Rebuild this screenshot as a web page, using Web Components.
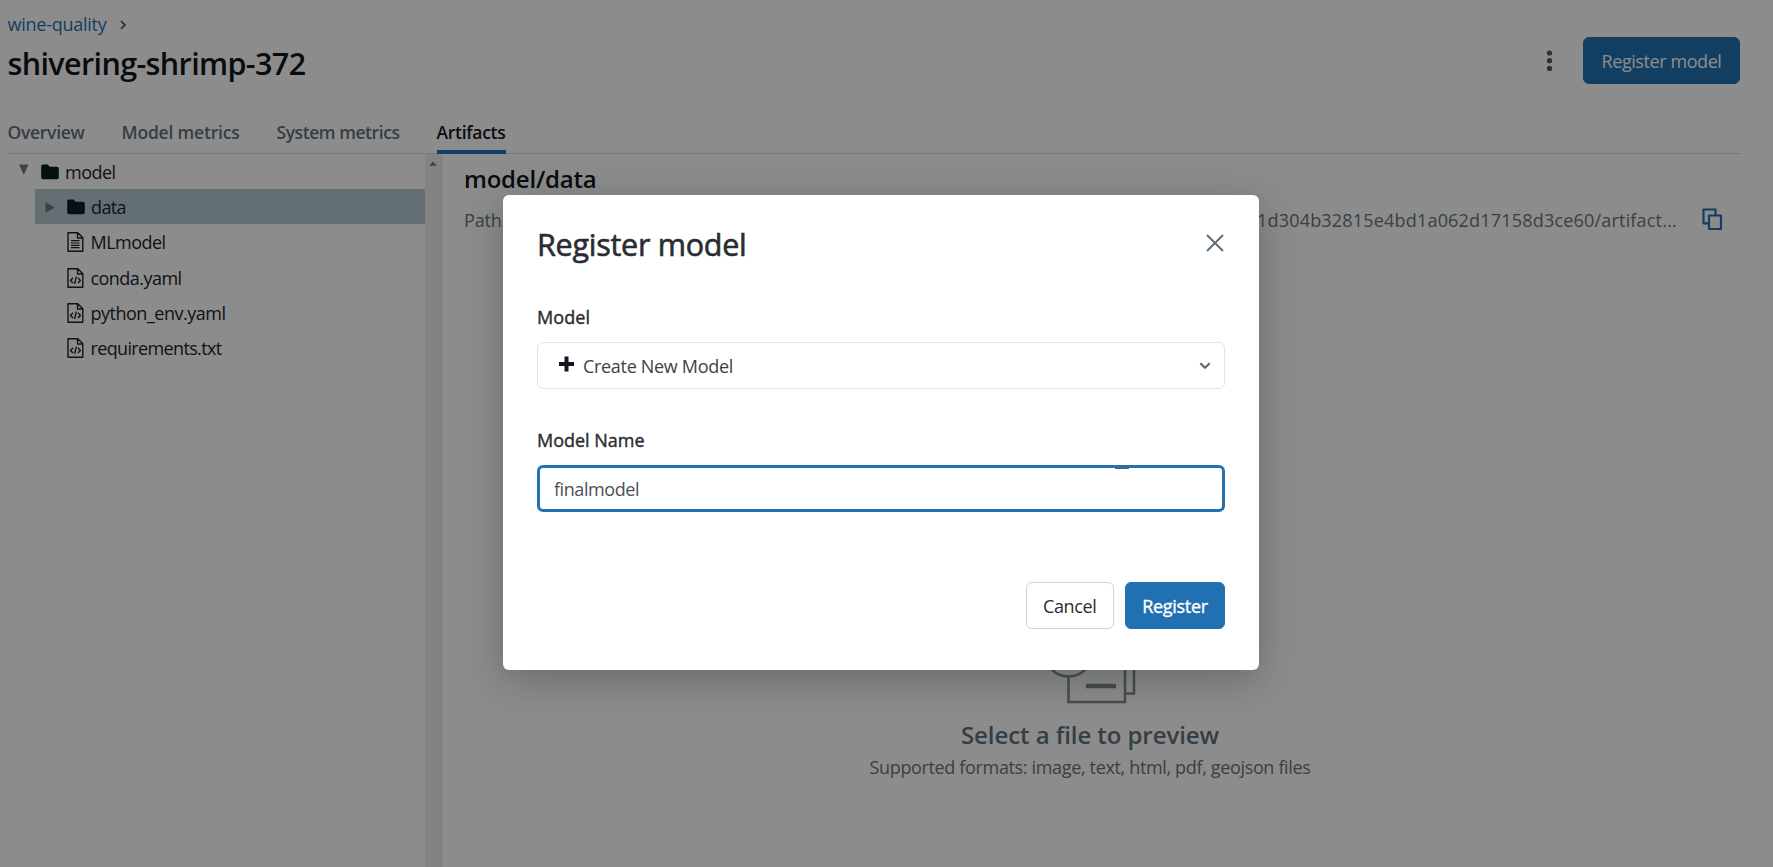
<!DOCTYPE html>
<html lang="en">
<head>
<meta charset="utf-8">
<title>shivering-shrimp-372</title>
<style>
html,body{margin:0;height:100%;overflow:hidden;background:#fff}
body{font-family:"Open Sans","Noto Sans",sans-serif;font-size:18px;line-height:24px;color:#11171c}
</style>
</head>
<body>
<run-page></run-page>
<register-dialog></register-dialog>
<script>
const define=(name,html,setup)=>{
  const t=document.createElement('template');
  t.innerHTML=html;
  customElements.define(name,class extends HTMLElement{
    connectedCallback(){
      if(this.shadowRoot)return;
      this.attachShadow({mode:'open'}).append(t.content.cloneNode(true));
      if(setup)setup(this,this.shadowRoot);
    }
  });
};

/* One line of text whose tracking is adjusted to fill the width in "w". */
define('fit-text',`<style>:host{display:block;white-space:pre;flex:none}span{display:inline-block}</style><span><slot></slot></span>`,(el,root)=>{
  const w=+el.getAttribute('w'),s=root.querySelector('span');
  el.style.width=w+'px';
  const n=el.textContent.length;
  s.style.letterSpacing=((w-s.getBoundingClientRect().width)/n)+'px';
});

const icons={
  folder:'<svg width="18" height="16" viewBox="0 0 18 16"><path fill="#0b1c22" d="M2 .5h4.6l2.2 2.3H16a1.8 1.8 0 0 1 1.8 1.8v8.900a1.800 1.800 0 0 1-1.800 1.800H2A1.800 1.800 0 0 1 .2 13.500V2.300A1.800 1.800 0 0 1 2 .5Z"/></svg>',
  file:'<svg width="17" height="20" viewBox="0 0 17 20" fill="none" stroke="#1d2428" stroke-width="1.400"><path d="M1 .8h9.800l5 5V19.200H1ZM10.500 1v5h5" stroke-linejoin="round"/><path d="M4 8.700h8.500M4 11h8.500M4 13.300h8.500M4 15.600h8.500" stroke-width="1.200"/></svg>',
  code:'<svg width="17" height="20" viewBox="0 0 17 20" fill="none" stroke="#1d2428" stroke-width="1.400"><path d="M1 .8h9.800l5 5V19.200H1ZM10.500 1v5h5M6 9.700 3.500 12.400 6 15.100M10.900 9.700l2.500 2.700-2.500 2.700M9.300 8.700l-1.700 7.400" stroke-linejoin="round"/></svg>',
  down:'<svg width="10" height="11"><path d="M0 .5h9.500L4.800 10.800Z" fill="#777"/></svg>',
  right:'<svg width="10" height="11"><path d="M.5.300 10 5.500.5 10.700Z" fill="#777"/></svg>',
};

define('run-breadcrumb',`<style>:host{display:flex;align-items:center;height:24px;padding-top:11.500px;color:#2272b4;gap:13px}svg{margin-top:3px}</style>
<fit-text w="99">wine-quality</fit-text>
<svg width="7" height="10" fill="none" stroke="#55626a" stroke-width="1.800"><path d="m1 1.200 4 3.800-4 3.800"/></svg>`);

define('ui-button',`<style>
:host{display:flex;box-sizing:border-box;height:47px;border-radius:6px;border:1px solid #c9d6dc;align-items:center;justify-content:center;background:#fff;padding-top:1px}
:host([primary]){background:#2171b2;color:#fff;border-color:#2171b2}
</style><slot></slot>`);

define('run-header',`<style>
:host{display:flex;justify-content:space-between;height:110px;margin:0 33px 0 7.500px}
h1{margin:0;font-size:30.500px;line-height:40px;font-weight:600;padding-top:7px}
.actions{display:flex;align-items:flex-start;gap:30.500px;padding-top:37px}
.menu{padding-top:12px;height:24px}
ui-button{width:157px}
</style>
<div><run-breadcrumb></run-breadcrumb><h1><fit-text w="298">shivering-shrimp-372</fit-text></h1></div>
<div class="actions"><svg class="menu" width="7" height="24" fill="#4c5a61"><circle cx="3.500" cy="4" r="2.600"/><circle cx="3.500" cy="11.700" r="2.600"/><circle cx="3.500" cy="19.400" r="2.600"/></svg>
<ui-button primary><fit-text w="120">Register model</fit-text></ui-button></div>`);

define('run-tabs',`<style>
:host{display:flex;box-sizing:border-box;height:44px;margin:0 33px 0 7.500px;border-bottom:1.500px solid #d3dade;gap:37px;color:#5f7281;font-weight:600;font-size:17.500px}
div{height:39.500px;padding-top:10px;box-sizing:border-box}
.on{color:#11171c;border-bottom:4.500px solid #2272b4;height:44px}
</style>
<div><fit-text w="77">Overview</fit-text></div><div><fit-text w="118">Model metrics</fit-text></div>
<div><fit-text w="123">System metrics</fit-text></div><div class="on"><fit-text w="69">Artifacts</fit-text></div>`);

define('tree-row',`<style>
:host{display:flex;align-items:center;height:35.200px;box-sizing:border-box;padding:1px 0 0 18.500px;color:#1d2428}
:host([nested]){margin-left:34.500px;padding-left:10px}
:host([selected]){background:#b6cbd3}
.arrow{width:11px;display:flex;margin-right:11px}
:host(:not([nested])) .arrow{margin-bottom:5px}
.icon{width:17px;display:flex;margin-right:7px}
.icon svg{flex:none}
:host([icon=folder]) .icon{margin-right:7.500px;margin-top:-1px}
</style><span class="arrow"></span><span class="icon"></span><slot></slot>`,(el,root)=>{
  root.querySelector('.arrow').innerHTML=icons[el.getAttribute('arrow')]||'';
  root.querySelector('.icon').innerHTML=icons[el.getAttribute('icon')];
});

define('artifact-tree',`<style>
:host{display:flex;width:442px;flex:none;box-sizing:border-box}
.rows{flex:1}
.bar{width:16px;background:#efefef;border-right:1px solid #dfe3e5;display:flex;justify-content:center;padding-top:7px}
</style>
<div class="rows">
<tree-row icon="folder" arrow="down"><fit-text w="50.500">model</fit-text></tree-row>
<tree-row nested selected icon="folder" arrow="right"><fit-text w="35">data</fit-text></tree-row>
<tree-row nested icon="file"><fit-text w="75">MLmodel</fit-text></tree-row>
<tree-row nested icon="code"><fit-text w="91">conda.yaml</fit-text></tree-row>
<tree-row nested icon="code"><fit-text w="135">python_env.yaml</fit-text></tree-row>
<tree-row nested icon="code"><fit-text w="131">requirements.txt</fit-text></tree-row>
</div>
<div class="bar"><svg width="8" height="5"><path d="M.3 4.800 4 .5l3.700 4.300Z" fill="#777"/></svg></div>`);

define('artifact-preview',`<style>
:host{display:flex;flex:1;flex-direction:column;min-width:0}
h2{margin:0;font-size:24px;line-height:32px;font-weight:600;padding:8.500px 0 0 22px}
.path{display:flex;align-items:center;color:#67767f;padding:13px 50px 0 22px;height:24px}
.path .end{margin-left:auto}
.path svg{margin:-1px 0 0 25px}
.empty{display:flex;flex-direction:column;align-items:center;color:#5f7281;padding:395px 0 0;width:440px;margin-left:428px}
.empty svg{margin-left:-1px}
h3{margin:0;font-size:24px;line-height:32px;font-weight:600;padding-top:15px}
.empty .sub{padding-top:4px;color:#67767f}
</style>
<h2><fit-text w="132.500">model/data</fit-text></h2>
<div class="path"><fit-text w="42">Path:</fit-text><fit-text class="end" w="420">1d304b32815e4bd1a062d17158d3ce60/artifact...</fit-text>
<svg width="21" height="23" fill="none" stroke="#2272b4" stroke-width="2.200"><path d="M6.500 15.300H1.500V1.500h12v5M7 7.500h12v13.500H7Z" stroke-linejoin="round"/></svg></div>
<div class="empty">
<svg width="94" height="77" viewBox="0 0 94 77" fill="none" stroke="#858a88" stroke-width="2.600"><path d="M25.500 49v26H82V2H40M82 66.500h9V12H83"/><circle cx="25.500" cy="26" r="23.500"/><path d="M43 59h30" stroke-width="4.500"/></svg>
<h3><fit-text w="258">Select a file to preview</fit-text></h3>
<fit-text class="sub" w="441">Supported formats: image, text, html, pdf, geojson files</fit-text>
</div>`);

define('run-page',`<style>
:host{display:flex;flex-direction:column;height:100vh;overflow:hidden}
main{display:flex;flex:1;min-height:0}
</style><run-header></run-header><run-tabs></run-tabs><main><artifact-tree></artifact-tree><artifact-preview></artifact-preview></main>`);

define('model-select',`<style>
:host{display:flex;align-items:center;box-sizing:border-box;height:47px;border:1.500px solid #dde5e8;border-radius:6px;padding:1px 13px 0 20.500px;color:#3c4246}
.plus{margin:-3px 8.500px 0 0}
.chev{margin-left:auto}
</style>
<svg class="plus" width="16" height="16"><path d="M0 8h15M7.500.5v15" stroke="#11171c" stroke-width="4"/></svg>
<fit-text w="150">Create New Model</fit-text>
<svg class="chev" width="12" height="8" fill="none" stroke="#5a6b78" stroke-width="2.200"><path d="m1.300 1.200 4.700 4.500 4.700-4.500"/></svg>`);

define('name-input',`<style>
:host{display:flex;position:relative;align-items:center;box-sizing:border-box;height:47px;border:3px solid #2373b2;border-radius:6px;padding:2px 14px 0;color:#4b5054}
i{position:absolute;left:575px;top:-3px;width:14px;height:4px;background:#356b98}
</style><fit-text w="85">finalmodel</fit-text><i></i>`);

define('register-dialog',`<style>
:host{position:absolute;inset:0;background:rgba(0,0,0,.45);overflow:hidden}
section{position:absolute;left:503px;top:195px;width:756px;height:474.500px;box-sizing:border-box;background:#fff;border-radius:6px;padding:28px 34px 0;box-shadow:0 10px 38px rgba(22,38,34,.3);color:#292d31}
header{display:flex;justify-content:space-between;align-items:flex-start}
h2{margin:0;font-size:30.500px;line-height:42px;font-weight:400;-webkit-text-stroke:.6px}
header svg{margin:10.500px 1.500px 0 0}
label{display:block;font-weight:400;-webkit-text-stroke:.4px;line-height:24px}
.l1{margin:39.500px 0 13px}
.l2{margin:39px 0 13px}
footer{display:flex;justify-content:flex-end;gap:11px;margin-top:70px}
</style>
<section>
<header><h2><fit-text w="209.500">Register model</fit-text></h2><svg width="18" height="18" stroke="#5a6b78" stroke-width="1.900"><path d="m1 1 16 16M17 1 1 17"/></svg></header>
<label class="l1"><fit-text w="53">Model</fit-text></label>
<model-select></model-select>
<label class="l2"><fit-text w="107.500">Model Name</fit-text></label>
<name-input></name-input>
<footer><ui-button style="width:88.500px"><fit-text w="53.500">Cancel</fit-text></ui-button><ui-button primary style="width:100px;-webkit-text-stroke:.35px"><fit-text w="65.500">Register</fit-text></ui-button></footer>
</section>`);
</script>
</body>
</html>
